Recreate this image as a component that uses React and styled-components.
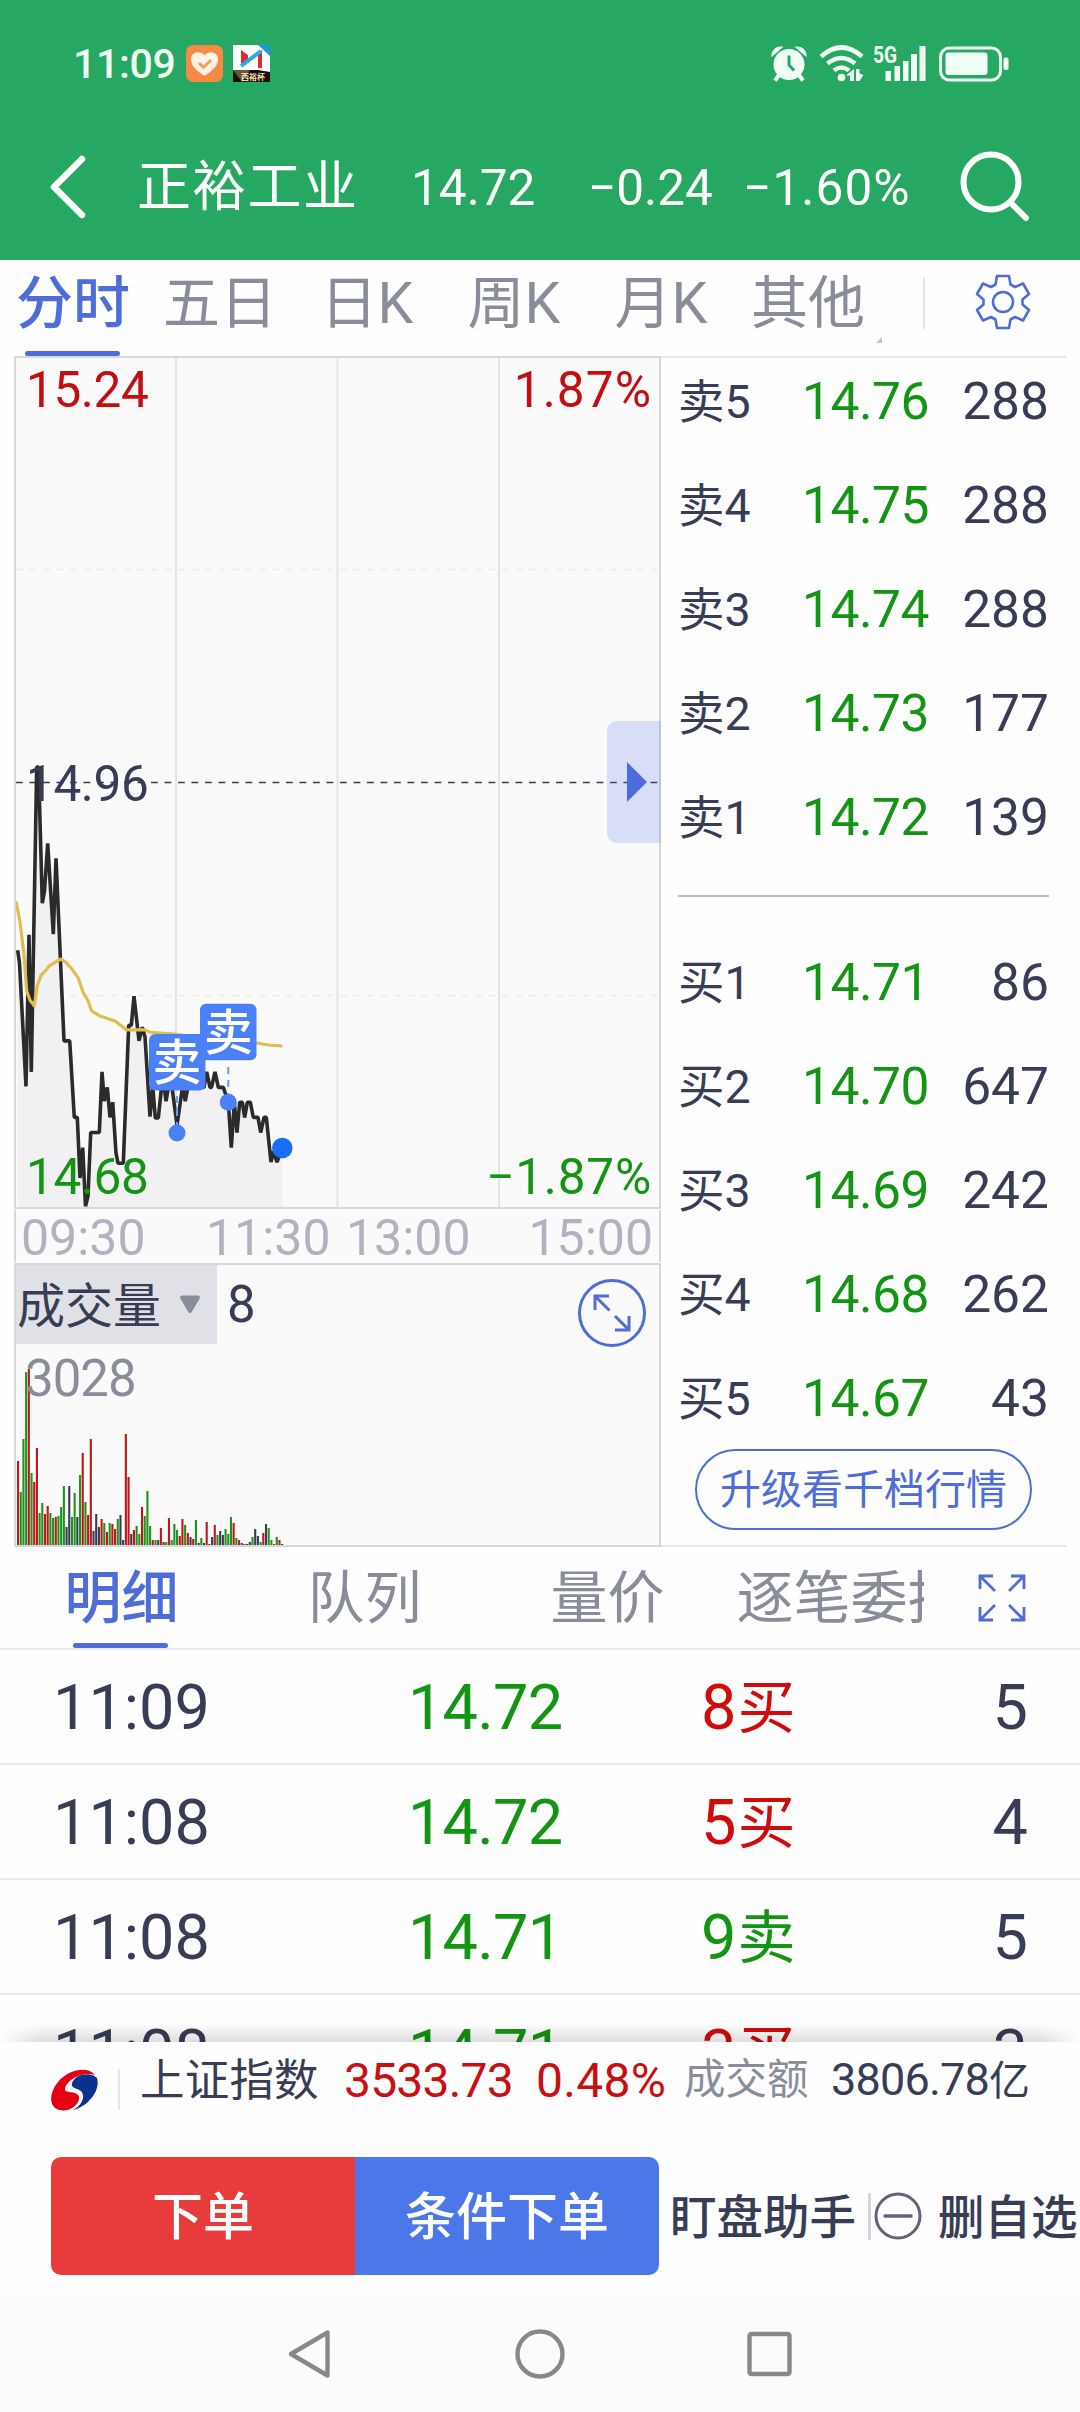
import React from 'react';
import styled, { createGlobalStyle } from 'styled-components';

const INK = '#383d55';
const GREY = '#898d9a';
const BLUE = '#4f6dd9';
const RED = '#d10a0a';
const GREEN = '#139413';

const sells = [
  ['卖5', '14.76', '288'],
  ['卖4', '14.75', '288'],
  ['卖3', '14.74', '288'],
  ['卖2', '14.73', '177'],
  ['卖1', '14.72', '139'],
];

const buys = [
  ['买1', '14.71', '86'],
  ['买2', '14.70', '647'],
  ['买3', '14.69', '242'],
  ['买4', '14.68', '262'],
  ['买5', '14.67', '43'],
];

const trades = [
  { time: '11:09', price: '14.72', amount: '8', side: '买', count: '5' },
  { time: '11:08', price: '14.72', amount: '5', side: '买', count: '4' },
  { time: '11:08', price: '14.71', amount: '9', side: '卖', count: '5' },
  { time: '11:08', price: '14.71', amount: '3', side: '买', count: '3' },
];

const priceLine = `3.7,594.3 5.5,607 12,730.4 15,578.8 17.3,715.9 22.7,411.1 24.5,411.1 28.3,547.2 30.5,535
33.7,487.3 39.3,578.2 42,502.4 50,684.9 55.7,684.9 60.3,761.4 63.3,761.4 66,822 68.7,791.7 71.5,850.2
74,840 76.7,776.5 85.3,776.5 88,715.9 90.3,745.2 93.3,731.4 96,761.4 98.7,746.2 102,797 104,807.2
109.3,807.2 114.7,669.4 117.3,669.4 120,640.1 125,684.9 128.3,671.1 131,681 136,760.7 138.7,729.7
141.3,762 144.3,762 147.7,729.7 150,729.7 152,745.2 154.7,729.7 158,731 163,769.3 168.7,729.7
171.3,745.2 174.3,729 190,731.4 192.7,715.9 196,731.4 197.5,731.4 201,715.9 204.3,731.4 209.3,731.4
214.3,746.2 217.3,791.7 220.3,747 223,776.5 225.7,746.2 228.3,746.2 230.7,761.4 233.3,746.2
236.3,746.2 239.3,761.4 244,761.4 246.7,776.5 250,761.4 252.3,761.4 257,806.1 259.3,795 263,806.1
268.3,792`;

const averageLine = `2,545.4 6,566 10,598.8 12.7,635 16,644.3 20.3,649.8 23.3,629.8 27.3,618.8 31,615.4 35.3,609.8
41,606.4 47,603 52,606.4 57.7,612.6 64.3,622.2 69.3,636.7 74.3,645.3 77.3,654.6 86,660.1 101,665
112.7,673.9 131,673.9 136,676.3 161,678 192.7,683 242.7,687 254.3,689 268.3,690`;

// one entry per minute: r = up, g = down, k = flat
const volumes = `r84 g53 g106 g173 r176 g72 r63 r97 g32 g42 r31 r39 g32 g27 r28 g29 g38 g59 k18 k59 g28 g52 k28
g70 r92 g43 r30 r106 k14 k31 k18 r26 g22 r13 g22 r21 r16 g26 k30 k5 r111 r68 k11 r15 g19 g11 r38 g29 g54
g19 r5 g5 k5 r17 k3 g3 r27 g5 g21 g15 r9 r26 g20 r12 k8 r6 g25 k2 g7 k2 r23 k1 k8 r20 g10 k14 k10 g16 g11
g28 r22 g7 r5 k2 r1 k1 k3 g8 k16 k9 g3 r12 k21 g17 g5 r1 g8 r5 k1`.split(/\s+/);

const barColors = { r: '#c41616', g: '#1f931f', k: INK };

const OrderRow = ({ row }) => (
  <BookRow>
    <BookLabel>{row[0]}</BookLabel>
    <BookPrice>{row[1]}</BookPrice>
    <BookVolume>{row[2]}</BookVolume>
  </BookRow>
);

const PriceChart = () => (
  <PricePanel>
    <svg width="647" height="853" viewBox="0 0 647 853">
      <g stroke="#e3e4e7" strokeWidth="2">
        <path d="M162 2V851M323.500 2V851M485 2V851" />
      </g>
      <polygon points={`3.7,851 ${priceLine} 268.3,851`} fill="#f1f1f4" />
      <g stroke="#ececee" strokeWidth="1.500" strokeDasharray="7 6.500">
        <path d="M2 213.500H645M2 639.500H645" />
      </g>
      <path d="M2 426.500H645" stroke={INK} strokeWidth="1.700" strokeDasharray="6.800 6.700" />
      <polyline points={priceLine} fill="none" stroke="#2b2b2b" strokeWidth="3.600" strokeLinejoin="bevel" />
      <polyline points={averageLine} fill="none" stroke="#dfbd4f" strokeWidth="3.200" strokeLinejoin="round" />
      <g stroke="#6f97f5" strokeWidth="2" strokeDasharray="7 6">
        <path d="M163 740V770M214.300 711V740" />
      </g>
      <g fill="#4a80f8">
        <circle cx="163" cy="777" r="8.500" />
        <circle cx="214.300" cy="746.200" r="8.500" />
        <rect x="186" y="647.700" width="56.500" height="56.500" rx="6" />
        <rect x="135" y="678" width="56.500" height="56.500" rx="6" />
      </g>
      <circle cx="268.300" cy="792" r="10.300" fill="#186ff5" />
      <TagText x="163" y="724">卖</TagText>
      <TagText x="214.500" y="694">卖</TagText>
    </svg>
    <ChartLabel $top={6} $left={12} $color="#c30d10">15.24</ChartLabel>
    <ChartLabel $top={6} $right={9} $spacing={1.1} $color="#c30d10">1.87%</ChartLabel>
    <ChartLabel $top={400} $left={12} $color={INK}>14.96</ChartLabel>
    <ChartLabel $top={793} $left={12} $color={GREEN}>14.68</ChartLabel>
    <ChartLabel $top={793} $right={9} $spacing={0.8} $color={GREEN}>−1.87%</ChartLabel>
    <Handle>
      <svg width="20" height="40" viewBox="0 0 20 40">
        <path d="M0 0L20 20L0 40Z" fill="#4c6bdd" />
      </svg>
    </Handle>
  </PricePanel>
);

const VolumeChart = () => (
  <VolumePanel>
    <VolumeHead>
      <VolumeSelect>
        <span>成交量</span>
        <svg width="22" height="19" viewBox="0 0 22 19">
          <path d="M3 2.500H19L11 16Z" fill={GREY} stroke={GREY} strokeWidth="4" strokeLinejoin="round" />
        </svg>
      </VolumeSelect>
      <VolumeValue>8</VolumeValue>
      <svg width="70" height="70" viewBox="0 0 70 70" fill="none" stroke={BLUE} strokeWidth="3">
        <circle cx="35" cy="35" r="32.500" />
        <path d="M32.500 32.500L18 18M18 32V18H32M38 38L52 52M52 38V52H38" />
      </svg>
    </VolumeHead>
    <VolumeBars width="643" height="200" viewBox="0 0 643 200">
      {volumes.map((item, i) => {
        const height = Number(item.slice(1));
        return (
          <rect key={i} x={1 + i * 2.695} y={200 - height} width="2.100" height={height} fill={barColors[item[0]]} />
        );
      })}
    </VolumeBars>
    <VolumeMax>3028</VolumeMax>
  </VolumePanel>
);

const App = () => (
  <Screen>
    <GlobalStyle />
    <Header>
      <StatusBar>
        <Clock>11:09</Clock>
        <svg width="37" height="37" viewBox="0 0 37 37">
          <rect width="37" height="37" rx="7" fill="#f58945" />
          <path d="M18.500 31C11 26 5 21 5 14.500C5 6.500 14.500 5 18.500 10.500C22.500 5 32 6.500 32 14.500C32 21 26 26 18.500 31Z" fill="#fff3e6" />
          <path d="M13 18L17.500 22.500L25 15" fill="none" stroke="#f0a05c" strokeWidth="3" />
        </svg>
        <AppBadge width="37" height="37" viewBox="0 0 37 37">
          <rect width="37" height="37" fill="#fff" />
          <path d="M25 0H37V11Z" fill="#1b9ad6" />
          <path d="M8 5L15 10V17L8 21ZM25 8L29 5V23H25Z" fill="#e02a35" />
          <path d="M8 21L28 6" stroke="#22aee6" strokeWidth="4" />
          <path d="M0 25H25L37 27V37H0Z" fill="#17110a" />
          <path d="M0 25H17L9 37" fill="#8d7444" opacity=".7" />
          <text x="8" y="34.500" fontSize="8" fontWeight="700" fill="#f0dfb0">西裕杯</text>
        </AppBadge>
        <StatusIcons width="240" height="38" viewBox="0 0 240 38" fill="#effff5">
          <circle cx="18" cy="19.500" r="15.500" />
          <path d="M1.500 10A8 8 0 0 1 10 2.500ZM34.500 10A8 8 0 0 0 26 2.500Z" stroke="#effff5" strokeWidth="2" />
          <path d="M8 30L4 35.500M28 30L32 35.500" stroke="#effff5" strokeWidth="4" />
          <path d="M18 10.500V20L23 25.500" fill="none" stroke="#26a862" strokeWidth="3" />
          <g fill="none" stroke="#effff5" strokeWidth="4.600">
            <path d="M50 11.500Q70.500 -6.500 91 11.500M56.500 18.500Q70.500 7.500 84 18.500M63 25.500Q70.500 19.500 78 25.500" />
          </g>
          <circle cx="70.500" cy="32.500" r="3.800" />
          <path d="M75 30.500L83 24V36H79V30.500ZM85 24H88.500V28.500L92.500 30L88.500 36H85Z" />
          <text x="102" y="17.500" fontSize="23" fontWeight="700" textLength="24" lengthAdjust="spacingAndGlyphs">5G</text>
          <path d="M114.500 26H120V36H114.500ZM123.500 21H129V36H123.500ZM132 16H137.500V36H132ZM140 9H146V36H140ZM148.500 1H154.500V36H148.500Z" />
          <rect x="169.500" y="3" width="60" height="32" rx="9" fill="none" stroke="#effff5" strokeWidth="3" />
          <rect x="174.500" y="7.500" width="42" height="22.500" rx="3" />
          <rect x="232.500" y="12.500" width="5" height="12.500" rx="2" />
        </StatusIcons>
      </StatusBar>
      <TitleBar>
        <svg width="40" height="70" viewBox="0 0 40 70" fill="none" stroke="#fff" strokeWidth="6.500" strokeLinecap="round" strokeLinejoin="round">
          <path d="M33 6L5 34L33 62" />
        </svg>
        <StockName>正裕工业</StockName>
        <Quote $width={177}>14.72</Quote>
        <Quote $width={155}>−0.24</Quote>
        <Quote $width={214} $spacing={1.1}>−1.60%</Quote>
        <svg width="74" height="76" viewBox="0 0 74 76" fill="none" stroke="#fff" strokeWidth="6" strokeLinecap="round">
          <circle cx="34" cy="32" r="27.500" />
          <path d="M53 52L69 68" />
        </svg>
      </TitleBar>
    </Header>

    <PeriodBar>
      <Tab $width={147} $active>分时</Tab>
      <Tab $width={147}>五日</Tab>
      <Tab $width={147}>日K</Tab>
      <Tab $width={147}>周K</Tab>
      <Tab $width={147}>月K</Tab>
      <Tab $width={147}>
        其他
        <Corner />
      </Tab>
      <Separator />
      <svg width="56" height="56" viewBox="0 0 56 56" fill="none" stroke={BLUE} strokeWidth="2.600" strokeLinejoin="round">
        <path d="M22 2H34L35.500 10.500L40 13L48 9.500L54 20L47.500 25.500V30.500L54 36L48 46.500L40 43L35.500 45.500L34 54H22L20.500 45.500L16 43L8 46.500L2 36L8.500 30.500V25.500L2 20L8 9.500L16 13L20.500 10.500Z" />
        <circle cx="28" cy="28" r="10" />
      </svg>
    </PeriodBar>

    <Market>
      <Charts>
        <PriceChart />
        <TimeAxis>
          <span>09:30</span>
          <span>11:30</span>
          <span>13:00</span>
          <span>15:00</span>
        </TimeAxis>
        <VolumeChart />
      </Charts>
      <Book>
        <BookSide>
          {sells.map(row => <OrderRow key={row[0]} row={row} />)}
        </BookSide>
        <BookLine />
        <BookSide>
          {buys.map(row => <OrderRow key={row[0]} row={row} />)}
        </BookSide>
        <Upgrade>升级看千档行情</Upgrade>
      </Book>
    </Market>

    <DetailBar>
      <DetailTabs>
        <Tab $width={243} $active>明细</Tab>
        <Tab $width={243}>队列</Tab>
        <Tab $width={243}>量价</Tab>
        <Tab $width={243}>逐笔委托</Tab>
      </DetailTabs>
      <svg width="48" height="48" viewBox="0 0 48 48" fill="none" stroke={BLUE} strokeWidth="2.800">
        <path d="M2 15V2H15M2 2L17 17M33 2H46V15M46 2L31 17M2 33V46H15M2 46L17 31M33 46H46V33M46 46L31 31" />
      </svg>
    </DetailBar>

    <Trades>
      {trades.map((trade, i) => (
        <TradeRow key={i}>
          <span>{trade.time}</span>
          <TradePrice>{trade.price}</TradePrice>
          <TradeSide $color={trade.side === '买' ? RED : GREEN}>
            {trade.amount}
            <small>{trade.side}</small>
          </TradeSide>
          <TradeCount>{trade.count}</TradeCount>
        </TradeRow>
      ))}
      <Shade />
    </Trades>

    <IndexBar>
      <svg width="47" height="42" viewBox="0 0 47 42">
        <path d="M44 6C37 -3 18 0 7 13C-2 24 -2 36 6 40C16 45 29 36 28 28C27 21 13 25 14 20C15 11 32 2 44 6Z" fill="#e60012" />
        <path d="M46 9C40 2 24 5 21 14C19 21 31 18 32 26C33 32 28 38 22 41C36 38 50 22 46 9Z" fill="#0b318f" />
      </svg>
      <IndexRule />
      <IndexName>上证指数</IndexName>
      <IndexNumber $width={192}>3533.73</IndexNumber>
      <IndexNumber $width={148} $spacing={0.3}>0.48%</IndexNumber>
      <TurnoverLabel>成交额</TurnoverLabel>
      <Turnover>
        3806.78<small>亿</small>
      </Turnover>
    </IndexBar>

    <Actions>
      <OrderButton $color="#e73c3b">下单</OrderButton>
      <OrderButton $color="#4b77e8">条件下单</OrderButton>
      <ActionText>盯盘助手</ActionText>
      <ActionRule />
      <svg width="48" height="48" viewBox="0 0 48 48" fill="none" stroke="#5f6476" strokeWidth="3">
        <circle cx="24" cy="24" r="22" />
        <path d="M11 24H37" strokeWidth="3.500" strokeLinecap="round" />
      </svg>
      <ActionText $gap={16}>删自选</ActionText>
    </Actions>

    <NavBar>
      <svg width="48" height="52" viewBox="0 0 48 52">
        <path d="M41.500 4.500V47.500L5 26Z" />
      </svg>
      <svg width="52" height="52" viewBox="0 0 52 52">
        <circle cx="26" cy="26" r="22.500" />
      </svg>
      <svg width="48" height="52" viewBox="0 0 48 52">
        <rect x="4.500" y="6" width="40" height="40" rx="2" />
      </svg>
    </NavBar>
  </Screen>
);

export default App;

const GlobalStyle = createGlobalStyle`
  * {
    box-sizing: border-box;
  }
  body {
    margin: 0;
    background: #fefefe;
    color: ${INK};
    font-family: Roboto, 'Noto Sans CJK SC', sans-serif;
  }
  svg {
    display: block;
    flex: none;
  }
`;

const Screen = styled.div`
  width: 1080px;
  height: 2412px;
  display: flex;
  flex-direction: column;
  overflow: hidden;
  white-space: nowrap;
`;

const Header = styled.header`
  height: 260px;
  flex: none;
  background: #26a862;
  color: #fff;
`;

const StatusBar = styled.div`
  height: 114px;
  padding: 13px 0 0 73px;
  display: flex;
  align-items: center;
`;

const Clock = styled.div`
  width: 113px;
  font-size: 41px;
  font-weight: 500;
  letter-spacing: -0.3px;
  color: #effff5;
`;

const AppBadge = styled.svg`
  margin-left: 10px;
`;

const StatusIcons = styled.svg`
  overflow: visible;
  margin-left: 501px;
`;

const TitleBar = styled.div`
  height: 146px;
  padding: 1px 0 0 49px;
  display: flex;
  align-items: center;
  line-height: 60px;
`;

const StockName = styled.h1`
  width: 274px;
  margin: 0 0 0 48px;
  font-size: 54px;
  font-weight: 400;
  letter-spacing: 1.3px;
`;

const Quote = styled.span`
  width: ${props => props.$width}px;
  flex: none;
  font-size: 49.5px;
  letter-spacing: ${props => props.$spacing || 0}px;
`;

const PeriodBar = styled.nav`
  height: 96px;
  flex: none;
  display: flex;
  align-items: center;
  & > svg {
    margin-bottom: 12px;
  }
`;

const Tab = styled.div`
  width: ${props => props.$width}px;
  height: 100%;
  flex: none;
  position: relative;
  display: flex;
  align-items: center;
  justify-content: center;
  padding: 0 1px 8px 0;
  font-size: 57px;
  line-height: 60px;
  font-weight: ${props => (props.$active ? 500 : 400)};
  color: ${props => (props.$active ? BLUE : GREY)};
  &::after {
    content: '';
    display: ${props => (props.$active ? 'block' : 'none')};
    position: absolute;
    left: calc(50% - 48.5px);
    bottom: 0;
    width: 95px;
    height: 5px;
    border-radius: 3px;
    background: ${BLUE};
  }
`;

const Corner = styled.i`
  position: absolute;
  right: 0;
  bottom: 13px;
  border-left: 6px solid transparent;
  border-bottom: 6px solid #c3c4c8;
`;

const Separator = styled.div`
  width: 2px;
  height: 52px;
  margin: 0 50px 11px 41px;
  background: #e6e6e8;
`;

const Market = styled.section`
  height: 1191px;
  flex: none;
  margin: 0 14px;
  display: flex;
  border-top: 2px solid #e8e8ea;
  border-bottom: 2px solid #e8e8ea;
`;

const Charts = styled.div`
  width: 647px;
  margin: -2px 0;
  flex: none;
`;

const PricePanel = styled.div`
  height: 853px;
  position: relative;
  background: #fafafa;
  outline: 2px solid #d6d8dd;
  outline-offset: -2px;
`;

const TagText = styled.text`
  font-size: 49px;
  font-weight: 500;
  fill: #fff;
  text-anchor: middle;
`;

const ChartLabel = styled.span`
  position: absolute;
  top: ${props => props.$top}px;
  left: ${props => (props.$left ? `${props.$left}px` : 'auto')};
  right: ${props => (props.$right ? `${props.$right}px` : 'auto')};
  font-size: 49.5px;
  line-height: 56px;
  letter-spacing: ${props => props.$spacing || -0.4}px;
  color: ${props => props.$color};
`;

const Handle = styled.div`
  position: absolute;
  top: 365px;
  right: 0;
  width: 54px;
  height: 122px;
  padding-left: 20px;
  display: flex;
  align-items: center;
  border-radius: 10px 0 0 10px;
  background: rgba(79, 109, 230, 0.2);
`;

const TimeAxis = styled.div`
  height: 52px;
  margin: 1px 0;
  padding: 0 6px 0 5px;
  display: grid;
  grid-template-columns: 185px 140px 1fr auto;
  border: solid #d6d8dd;
  border-width: 0 2px;
  background: #fafafa;
  font-size: 50px;
  line-height: 56px;
  color: #b0b3bf;
`;

const VolumePanel = styled.div`
  height: 284px;
  position: relative;
  border: 2px solid #d6d8dd;
  background: #fafafa;
`;

const VolumeHead = styled.div`
  display: flex;
  align-items: flex-start;
  height: 79px;
  & > svg:last-child {
    margin: 13px 12px 0 auto;
  }
`;

const VolumeSelect = styled.div`
  width: 201px;
  height: 79px;
  padding-left: 1px;
  display: flex;
  align-items: center;
  gap: 18px;
  font-size: 48px;
  background: #e0e1e6;
  span {
    padding-bottom: 5px;
  }
`;

const VolumeValue = styled.span`
  margin-left: 10px;
  font-size: 51px;
  line-height: 80px;
`;

const VolumeBars = styled.svg`
  position: absolute;
  left: 0;
  bottom: 0;
`;

const VolumeMax = styled.div`
  position: relative;
  padding: 5px 0 0 9px;
  font-size: 51px;
  line-height: 60px;
  letter-spacing: -1px;
  color: ${GREY};
`;

const Book = styled.div`
  width: 371px;
  margin-left: 17px;
  display: flex;
  flex-direction: column;
`;

const BookSide = styled.div`
  display: grid;
  gap: 20px;
`;

const BookRow = styled.div`
  height: 84px;
  display: flex;
  align-items: center;
  line-height: 84px;
  padding-top: 4px;
`;

const BookLabel = styled.span`
  width: 124px;
  font-size: 46.5px;
`;

const BookPrice = styled.span`
  font-size: 51.5px;
  letter-spacing: -0.5px;
  color: ${GREEN};
`;

const BookVolume = styled.span`
  margin-left: auto;
  font-size: 51.5px;
`;

const BookLine = styled.hr`
  width: 100%;
  height: 2px;
  margin: 37px 0 42px;
  border: 0;
  background: #bbbcc5;
`;

const Upgrade = styled.button`
  width: 337px;
  height: 81px;
  margin: 10px 0 0 17px;
  padding: 0;
  border: 2px solid ${BLUE};
  border-radius: 41px;
  background: none;
  color: ${BLUE};
  font: 41px / 60px Roboto, 'Noto Sans CJK SC', sans-serif;
`;

const DetailBar = styled.nav`
  height: 103px;
  flex: none;
  display: flex;
  align-items: center;
  border-bottom: 2px solid #e8e8ea;
  & > svg {
    margin-left: 54px;
  }
  ${Tab} {
    padding: 3px 0 0;
  }
`;

const DetailTabs = styled.div`
  width: 924px;
  height: 100%;
  display: flex;
  overflow: hidden;
`;

const Trades = styled.section`
  height: 392px;
  flex: none;
  position: relative;
  overflow: hidden;
`;

const TradeRow = styled.div`
  height: 115px;
  padding: 1px 52px 0 53px;
  display: grid;
  grid-template-columns: 355px 293px 1fr auto;
  align-items: center;
  border-bottom: 2px solid #e8e8ea;
  font-size: 63px;
  line-height: 114px;
`;

const TradePrice = styled.span`
  letter-spacing: -0.8px;
  color: ${GREEN};
`;

const TradeSide = styled.span`
  display: flex;
  color: ${props => props.$color};
  small {
    margin-left: 1px;
    font-size: 58px;
  }
`;

const TradeCount = styled.span`
  text-align: right;
`;

const Shade = styled.div`
  position: absolute;
  left: 0;
  right: 0;
  bottom: 0;
  height: 17px;
  background: linear-gradient(rgba(0, 0, 0, 0.01), rgba(0, 0, 0, 0.13));
  mask-image: linear-gradient(90deg, transparent, #000 40px, #000 1040px, transparent);
`;

const IndexBar = styled.div`
  height: 115px;
  flex: none;
  padding: 9px 0 0 51px;
  display: flex;
  align-items: flex-start;
  line-height: 60px;
  & > svg {
    margin-top: 18px;
  }
`;

const IndexRule = styled.div`
  width: 2px;
  height: 41px;
  margin: 18px 20px 0 20px;
  background: #e6e6e8;
`;

const IndexName = styled.span`
  width: 204px;
  font-size: 44.5px;
  letter-spacing: 0.2px;
`;

const IndexNumber = styled.span`
  width: ${props => props.$width}px;
  font-size: 48px;
  letter-spacing: ${props => props.$spacing || -0.8}px;
  color: #c80f12;
`;

const TurnoverLabel = styled.span`
  width: 147px;
  font-size: 41.5px;
  line-height: 57px;
  color: ${GREY};
`;

const Turnover = styled.span`
  font-size: 45px;
  line-height: 57px;
  letter-spacing: -0.8px;
  small {
    font-size: 41px;
  }
`;

const Actions = styled.div`
  height: 139px;
  flex: none;
  padding: 0 0 21px 51px;
  display: flex;
  align-items: center;
`;

const OrderButton = styled.button`
  width: 304px;
  height: 118px;
  padding: 4px 0 0;
  flex: none;
  border: 0;
  background: ${props => props.$color};
  color: #fff;
  font: 500 51px / 60px Roboto, 'Noto Sans CJK SC', sans-serif;
  &:first-child {
    border-radius: 10px 0 0 10px;
  }
  &:nth-child(2) {
    border-radius: 0 10px 10px 0;
  }
`;

const ActionText = styled.span`
  margin-left: ${props => props.$gap || 11}px;
  padding-top: 4px;
  font-size: 46.5px;
  font-weight: 500;
  line-height: 60px;
`;

const ActionRule = styled.div`
  width: 3px;
  height: 47px;
  margin: 0 3px 0 12px;
  flex: none;
  background: #d5d7de;
`;

const NavBar = styled.footer`
  flex: 1;
  display: flex;
  justify-content: space-between;
  padding: 32px 287px 0 286px;
  background: #fbfbfb;
  svg {
    fill: none;
    stroke: #888;
    stroke-width: 4.4px;
    stroke-linejoin: round;
  }
`;
